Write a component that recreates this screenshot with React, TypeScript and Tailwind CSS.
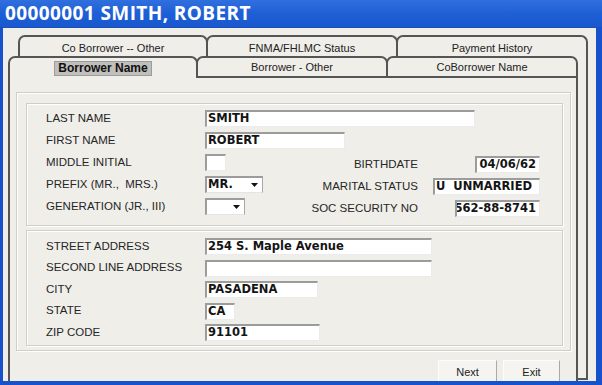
import React from 'react';

const BackTab = ({ label, first }: { label: string; first?: boolean }) => (
  <div
    className={`${first ? 'w-[190px]' : 'w-[192px] -ml-[2px]'} h-[22px] shrink-0 rounded-t-[7px] border-2 border-b-0 border-[#555] bg-[#efeee9] flex items-start justify-center pt-[3px] text-[11px] text-[#222]`}
  >
    {label}
  </div>
);

const FrontTab = ({ label, first, selected }: { label: string; first?: boolean; selected?: boolean }) => (
  <div
    className={`${first ? 'w-[190px]' : 'w-[192px] -ml-[2px]'} ${selected ? 'border-b-0' : 'border-b-2'} relative h-[22px] shrink-0 rounded-t-[7px] border-2 border-[#555] bg-[#efeee9] flex items-center justify-center text-[11px] text-[#222]`}
  >
    {selected ? (
      <span className="bg-[#c0bfbc] border border-[#9c9c9c] px-[3px] leading-[13px] font-bold text-[12px] text-[#111]">{label}</span>
    ) : (
      label
    )}
  </div>
);

const Field = ({ w, value, right }: { w: string; value?: string; right?: boolean }) => (
  <div
    className={`${w} ${right ? 'justify-end pr-[3px]' : 'pl-[1px]'} h-[17px] shrink-0 flex items-center bg-white border-t-2 border-l-2 border-r border-b border-t-[#9c9c9c] border-l-[#9c9c9c] border-r-[#ebebeb] border-b-[#ebebeb] font-['DejaVu_Sans',sans-serif] font-bold text-[11.5px] text-[#141414] whitespace-pre overflow-hidden`}
  >
    {value}
  </div>
);

const Select = ({ w, value }: { w: string; value?: string }) => (
  <div
    className={`${w} h-[17px] shrink-0 flex items-center bg-white border-t-2 border-l-2 border-r border-b border-t-[#9c9c9c] border-l-[#9c9c9c] border-r-[#a8a8a8] border-b-[#e4e4e4] font-['DejaVu_Sans',sans-serif] font-bold text-[11.5px] text-[#141414]`}
  >
    <span className="flex-1 pl-[1px]">{value}</span>
    <span className="w-[16px] h-full flex items-center justify-center">
      <svg width="7" height="4" viewBox="0 0 7 4">
        <path d="M0 0H7L3.5 4Z" fill="#111" />
      </svg>
    </span>
  </div>
);

const Label = ({ children }: { children: React.ReactNode }) => (
  <span className="w-[159px] shrink-0 whitespace-pre text-[11.5px] text-[#262626]">{children}</span>
);

const Row = ({ label, children }: { label: string; children: React.ReactNode }) => (
  <div className="h-[17px] flex items-center">
    <Label>{label}</Label>
    {children}
  </div>
);

const RightLabel = ({ children }: { children: React.ReactNode }) => (
  <span className="h-[17px] flex items-center justify-end whitespace-nowrap text-[11.5px] text-[#262626]">{children}</span>
);

const etched = 'border border-[#d0cec6] shadow-[inset_1px_1px_0_#ffffff,1px_1px_0_#ffffff]';

export default function App() {
  return (
    <div className="w-[602px] h-[385px] overflow-hidden bg-[#1552cc] flex flex-col font-['Liberation_Sans',Arial,sans-serif]">
      <div className="h-[28px] shrink-0 flex items-center pl-[5px] bg-gradient-to-b from-[#2f6fde] via-[#1e5fd6] to-[#1958cf] border-b border-[#1a4fb8]">
        <span className="font-['Open_Sans',sans-serif] font-bold text-[19px] text-white tracking-[0.4px] leading-none">
          00000001 SMITH, ROBERT
        </span>
      </div>

      <div className="flex-1 min-h-0 ml-[3px] mr-[6px] mb-[4px] bg-[#efeee9] overflow-hidden flex flex-col pt-[7px] pl-[5px]">
        <div className="flex ml-[10px] shrink-0">
          <BackTab label="Co Borrower -- Other" first />
          <BackTab label="FNMA/FHLMC Status" />
          <BackTab label="Payment History" />
        </div>

        <div className="flex-1 min-h-0 flex -mt-[1px]">
          <div className="w-[570px] flex flex-col">
            <div className="flex shrink-0 relative">
              <FrontTab label="Borrower Name" first selected />
              <FrontTab label="Borrower - Other" />
              <FrontTab label="CoBorrower Name" />
            </div>

            <div className="flex-1 border-l-2 border-r-2 border-[#555] flex flex-col">
              <div className={`mt-[14px] ml-[6px] mr-[5px] ${etched} pt-[10px] pb-[4px]`}>
                <div className={`ml-[9px] mr-[7px] ${etched} pt-[6px] pb-[8px] pl-[19px] pr-[22px] flex flex-col gap-[5px]`}>
                  <Row label="LAST NAME">
                    <Field w="w-[270px]" value="SMITH" />
                  </Row>
                  <Row label="FIRST NAME">
                    <Field w="w-[140px]" value="ROBERT" />
                  </Row>
                  <div className="flex">
                    <div className="flex flex-col gap-[5px]">
                      <Row label="MIDDLE INITIAL">
                        <Field w="w-[21px]" />
                      </Row>
                      <Row label="PREFIX (MR.,  MRS.)">
                        <Select w="w-[58px]" value="MR." />
                      </Row>
                      <Row label="GENERATION (JR., III)">
                        <Select w="w-[40px]" />
                      </Row>
                    </div>

                    <div className="ml-auto mt-[2px] shrink-0 grid grid-cols-[auto_122px] gap-y-[5px] self-start">
                      <RightLabel>BIRTHDATE</RightLabel>
                      <div className="flex justify-end">
                        <Field w="w-[65px]" value="04/06/62" right />
                      </div>
                      <RightLabel>MARITAL STATUS</RightLabel>
                      <div className="flex justify-end">
                        <Field w="w-[107px]" value="U  UNMARRIED" />
                      </div>
                      <RightLabel>SOC SECURITY NO</RightLabel>
                      <div className="flex justify-end">
                        <Field w="w-[85px]" value="562-88-8741" right />
                      </div>
                    </div>
                  </div>
                </div>

                <div className={`mt-[4px] ml-[9px] mr-[7px] ${etched} pt-[7px] pb-[4px] pl-[19px] flex flex-col gap-[4.5px]`}>
                  <Row label="STREET ADDRESS">
                    <Field w="w-[227px]" value="254 S. Maple Avenue" />
                  </Row>
                  <Row label="SECOND LINE ADDRESS">
                    <Field w="w-[227px]" />
                  </Row>
                  <Row label="CITY">
                    <Field w="w-[113px]" value="PASADENA" />
                  </Row>
                  <Row label="STATE">
                    <Field w="w-[30px]" value="CA" />
                  </Row>
                  <Row label="ZIP CODE">
                    <Field w="w-[115px]" value="91101" />
                  </Row>
                </div>
              </div>

              <div className="mt-[9px] flex justify-end gap-[6px] pr-[16px]">
                <button className="w-[59px] h-[26px] shrink-0 bg-[#f5f4f0] border border-[#fdfdfd] border-r-[#a9a9a6] pb-[1px] text-[11px] text-[#222]">
                  Next
                </button>
                <button className="w-[57px] h-[26px] shrink-0 bg-[#f5f4f0] border border-[#fdfdfd] border-r-[#a9a9a6] pb-[1px] text-[11px] text-[#222]">
                  Exit
                </button>
              </div>
            </div>
          </div>
          <div className="w-[10px] border-r-2 border-b-2 border-[#555] mb-[1px]" />
        </div>
      </div>
    </div>
  );
}
